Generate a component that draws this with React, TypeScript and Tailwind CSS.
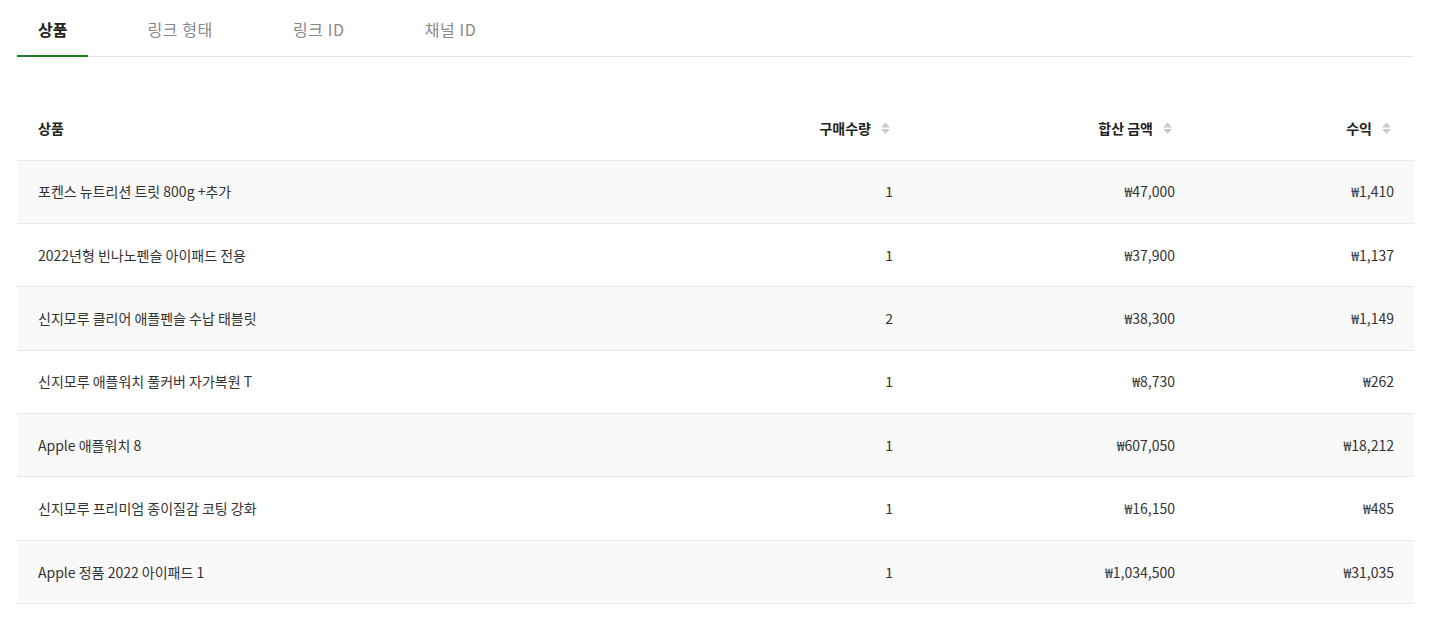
import { useState } from 'react'

const tabs = ['상품', '링크 형태', '링크 ID', '채널 ID']

const rows = [
  { name: '포켄스 뉴트리션 트릿 800g +추가', qty: 1, total: '₩47,000', profit: '₩1,410' },
  { name: '2022년형 빈나노펜슬 아이패드 전용', qty: 1, total: '₩37,900', profit: '₩1,137' },
  { name: '신지모루 클리어 애플펜슬 수납 태블릿', qty: 2, total: '₩38,300', profit: '₩1,149' },
  { name: '신지모루 애플워치 풀커버 자가복원 T', qty: 1, total: '₩8,730', profit: '₩262' },
  { name: 'Apple 애플워치 8', qty: 1, total: '₩607,050', profit: '₩18,212' },
  { name: '신지모루 프리미엄 종이질감 코팅 강화', qty: 1, total: '₩16,150', profit: '₩485' },
  { name: 'Apple 정품 2022 아이패드 1', qty: 1, total: '₩1,034,500', profit: '₩31,035' },
]

function SortIcon() {
  return (
    <svg width="16" height="14" viewBox="0 0 16 14" className="ml-[6px] shrink-0">
      <path d="M4 6.5 L8.5 1.5 L13 6.5 Z" fill="#c9c9c9" />
      <path d="M4 8 L8.5 13 L13 8 Z" fill="#c9c9c9" />
    </svg>
  )
}

export default function App() {
  const [active, setActive] = useState(0)

  return (
    <div
      className="min-h-[622px] bg-white pl-[17px] text-[#333]"
      style={{ fontFamily: '"Noto Sans CJK KR", "Noto Sans", sans-serif' }}
    >
      <div className="flex w-[1397px] gap-[38px] border-b border-[#e5e5e5]">
        {tabs.map((t, i) => (
          <button
            key={t}
            onClick={() => setActive(i)}
            className={
              i === active
                ? '-mb-px h-[57px] border-b-2 border-[#237a1f] px-[21px] pt-[2px] text-[16px] font-bold text-[#222]'
                : '-mb-px h-[57px] border-b-2 border-transparent px-[21px] pt-[2px] text-[16px] font-normal tracking-[0.6px] text-[#888]'
            }
          >
            {t}
          </button>
        ))}
      </div>

      <table className="mt-[40px] w-[1397px] table-fixed border-collapse text-[14px]">
        <colgroup>
          <col />
          <col className="w-[200px]" />
          <col className="w-[282px]" />
          <col className="w-[219px]" />
        </colgroup>
        <thead>
          <tr className="h-[63px] border-b border-[#e8e8e8] text-[#222]">
            <th className="pl-[21px] text-left font-bold">상품</th>
            <th className="pr-[20px] font-bold">
              <div className="flex items-center justify-end">
                구매수량
                <SortIcon />
              </div>
            </th>
            <th className="pr-[20px] font-bold">
              <div className="flex items-center justify-end">
                합산 금액
                <SortIcon />
              </div>
            </th>
            <th className="pr-[20px] font-bold">
              <div className="flex items-center justify-end">
                수익
                <SortIcon />
              </div>
            </th>
          </tr>
        </thead>
        <tbody>
          {rows.map((r, i) => (
            <tr
              key={r.name}
              className={
                i % 2 === 0
                  ? 'h-[63.4px] border-b border-[#e8e8e8] bg-[#f9f9f9]'
                  : 'h-[63.4px] border-b border-[#e8e8e8] bg-white'
              }
            >
              <td className="pl-[21px] text-left">{r.name}</td>
              <td className="pr-[20px] text-right">{r.qty}</td>
              <td className="pr-[20px] text-right">{r.total}</td>
              <td className="pr-[20px] text-right">{r.profit}</td>
            </tr>
          ))}
        </tbody>
      </table>
    </div>
  )
}
